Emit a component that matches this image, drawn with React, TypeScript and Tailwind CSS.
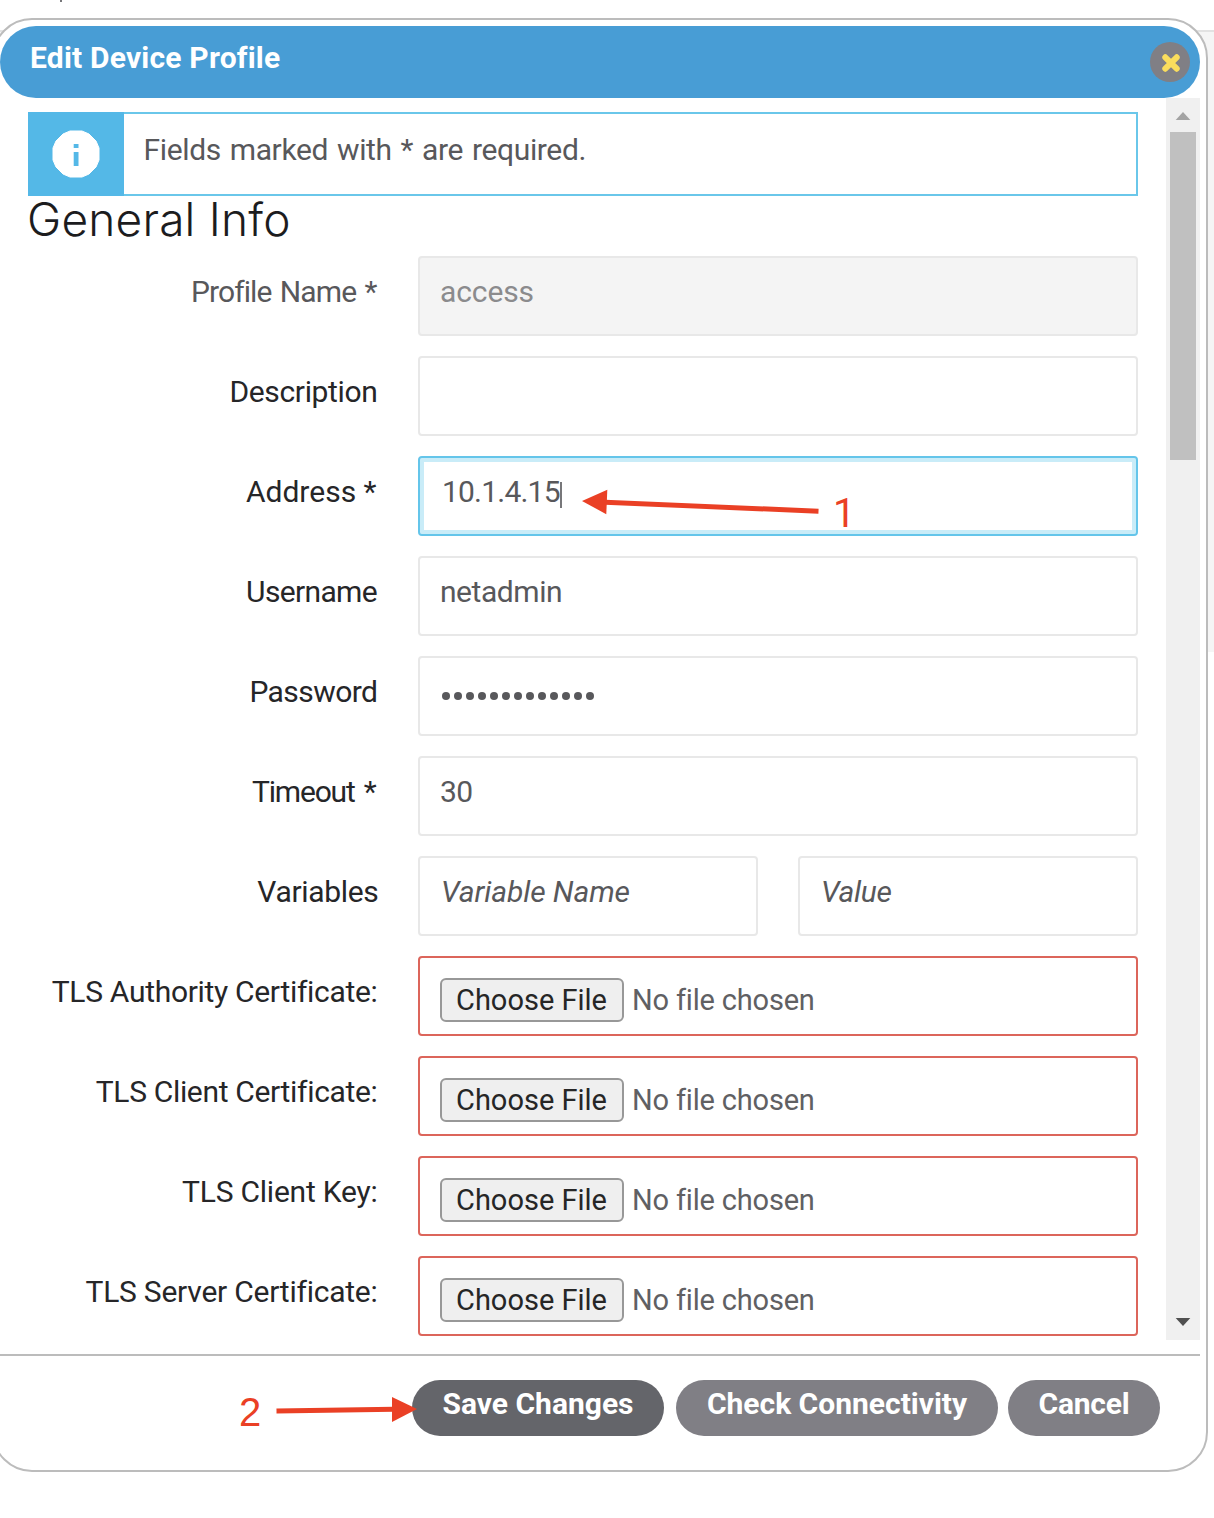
import React from "react";

type FieldRow = {
  label: string;
  labelClass: string;
  content: React.ReactNode;
};

const box = "h-[80px] rounded-[4px] border-2 px-[20px] pt-[14px] leading-[40px]";

function TextField({
  className = "",
  color = "text-[#58585b]",
  children,
}: {
  className?: string;
  color?: string;
  children?: React.ReactNode;
}) {
  return <div className={`${box} flex-1 border-[#e8e8e8] ${color} ${className}`}>{children}</div>;
}

function FileField() {
  return (
    <div className="flex h-[80px] flex-1 items-start gap-[8px] rounded-[4px] border-2 border-[#dc655b] px-[20px] pt-[20px] text-[29px] leading-[40px]">
      <button className="h-[44px] w-[184px] whitespace-nowrap rounded-[6px] border-2 border-[#989898] bg-[#efefef] pl-[14px] text-left leading-[40px] text-[#262626]">
        Choose File
      </button>
      <span className="pt-[2px] tracking-[-0.18px] text-[#606063]">No file chosen</span>
    </div>
  );
}

function PasswordDots() {
  return (
    <div className="flex gap-[4px] pl-[2px] pt-[20px]">
      {Array.from({ length: 13 }, (_, i) => (
        <span key={i} className="size-[8px] rounded-full bg-[#58585b]" />
      ))}
    </div>
  );
}

const rows: FieldRow[] = [
  {
    label: "Profile Name *",
    labelClass: "mr-[1.5px] tracking-[-0.9px] [word-spacing:1.8px] text-[#58585b]",
    content: (
      <TextField className="bg-[#f4f4f4] tracking-[-0.1px]" color="text-[#8b8b8d]">
        access
      </TextField>
    ),
  },
  { label: "Description", labelClass: "mr-[0.5px] tracking-[-0.35px]", content: <TextField /> },
  {
    label: "Address *",
    labelClass: "mr-[1.5px]",
    content: (
      <div
        className={`${box} flex flex-1 border-[#64c5ea] tracking-[-0.8px] text-[#58585b] shadow-[inset_0_0_0_4px_#c9ecf8]`}
      >
        <span className="pl-[2px]">10.1.4.15</span>
        <span className="mt-[10px] h-[26px] w-[2px] bg-[#77777a]" />
      </div>
    ),
  },
  {
    label: "Username",
    labelClass: "mr-[1px] tracking-[-0.65px]",
    content: <TextField className="tracking-[-0.45px]">netadmin</TextField>,
  },
  {
    label: "Password",
    labelClass: "mr-[0.5px] tracking-[-0.55px]",
    content: (
      <TextField>
        <PasswordDots />
      </TextField>
    ),
  },
  {
    label: "Timeout *",
    labelClass: "mr-[2.5px] tracking-[-1.2px] [word-spacing:3px]",
    content: <TextField className="tracking-[-0.5px]">30</TextField>,
  },
  {
    label: "Variables",
    labelClass: "mr-[-0.5px] tracking-[-0.32px]",
    content: (
      <div className="flex flex-1 gap-[40px]">
        <TextField className="italic tracking-[-0.1px]">
          <span className="pl-[1px]">Variable Name</span>
        </TextField>
        <TextField className="italic tracking-[-0.3px]">
          <span className="pl-[1px]">Value</span>
        </TextField>
      </div>
    ),
  },
  { label: "TLS Authority Certificate:", labelClass: "mr-[0.5px] tracking-[-0.31px]", content: <FileField /> },
  { label: "TLS Client Certificate:", labelClass: "mr-[0.5px] tracking-[-0.33px]", content: <FileField /> },
  { label: "TLS Client Key:", labelClass: "mr-[0.5px] tracking-[-0.22px]", content: <FileField /> },
  { label: "TLS Server Certificate:", labelClass: "mr-[0.5px] tracking-[-0.24px]", content: <FileField /> },
];

function Scrollbar() {
  return (
    <div className="ml-auto flex w-[34px] flex-col items-center bg-[#f0f0f0]">
      <svg className="mt-[14px] h-[8px] w-[16px]" viewBox="0 0 16 8">
        <path d="M8 0 L15.3 8 H0.7 Z" fill="#a3a3a3" />
      </svg>
      <div className="mt-[12px] h-[328px] w-[26px] bg-[#c0c0c0]" />
      <svg className="mb-[14px] mt-auto h-[9px] w-[16px]" viewBox="0 0 16 9">
        <path d="M8 9 L15.3 1 H0.7 Z" fill="#505050" />
      </svg>
    </div>
  );
}

function InfoAlert() {
  return (
    <div className="flex h-[84px] w-[1110px] border-2 border-[#6ac7ea]">
      <div className="-my-[2px] -ml-[2px] flex w-[96px] items-center justify-center bg-[#54b8e7]">
        <svg className="size-[48px]" viewBox="0 0 48 48">
          <path
            d="M18 1 L30 1 L37 4 L44 11 L47 18 L47 30 L44 37 L37 44 L30 47 L18 47 L11 44 L4 37 L1 30 L1 18 L4 11 L11 4 Z"
            fill="#fff"
            stroke="#fff"
            strokeLinejoin="round"
          />
          <path d="M21.7 14 h4.8 v4 h-4.8 Z M21.7 22 h4.8 v14 h-4.8 Z" fill="#54b8e7" />
        </svg>
      </div>
      <p className="pl-[19.5px] pt-[16px] leading-[40px] tracking-[-0.36px] text-[#58585b] [word-spacing:1.8px]">
        Fields marked with * are required.
      </p>
    </div>
  );
}

function Annotations() {
  return (
    <div className="pointer-events-none absolute inset-0 text-[40px] leading-[40px] text-[#ea4025]">
      <svg className="absolute inset-0 h-[1518px] w-[1214px]" viewBox="0 0 1214 1518">
        <g fill="#ea4025" stroke="#ea4025">
          <path d="M605 502.2 L818.5 511.2" strokeWidth="5" />
          <path d="M582 501 L607.3 489.7 L606.3 514.2 Z" stroke="none" />
          <path d="M276.5 1411 L394 1409.3" strokeWidth="5" />
          <path d="M417 1409 L392 1397 L392 1422 Z" stroke="none" />
        </g>
      </svg>
      <span className="absolute left-[833px] top-[494px]">1</span>
      <span className="absolute left-[239px] top-[1392px] font-['Liberation_Sans',sans-serif]">2</span>
    </div>
  );
}

const pill = "h-[56px] rounded-full pb-[12px] leading-[40px] pt-[4px] text-center font-bold text-white whitespace-nowrap";

export default function App() {
  return (
    <main className="relative grid h-[1518px] w-[1214px] items-start overflow-hidden bg-white font-['Roboto',sans-serif] text-[30px] text-[#262628]">
      <div className="col-start-1 row-start-1">
        <div className="ml-[60px] h-[2px] w-[2px] bg-[#77777a]" />
        <div className="mt-[28px] h-[622px] border-t-2 border-[#e2e2e2] bg-[#f5f5f5]" />
      </div>

      <section className="col-start-1 row-start-1 -ml-[8px] mt-[18px] flex h-[1454px] w-[1216px] flex-col rounded-[40px] border-2 border-[#bcbcbc] bg-white p-[6px]">
        <header className="flex h-[72px] shrink-0 rounded-full bg-[#489dd5] pl-[30px] pr-[10px]">
          <h1 className="pt-[12px] font-bold leading-[40px] tracking-[0.2px] text-white">Edit Device Profile</h1>
          <button className="ml-auto mt-[16px] flex size-[40px] items-center justify-center rounded-full bg-[#807f85]">
            <svg className="size-[40px]" viewBox="0 0 40 40">
              <path
                d="M15.3 15.3 L26.7 26.7 M26.7 15.3 L15.3 26.7"
                stroke="#fadd5d"
                strokeWidth="6"
                strokeLinecap="round"
              />
            </svg>
          </button>
        </header>

        <div className="flex h-[1242px] shrink-0">
          <div className="w-[1138px] pl-[28px] pt-[14px]">
            <InfoAlert />
            <h2 className="-ml-[1px] -mt-[4px] h-[64px] font-['Inter',sans-serif] text-[46px] font-light leading-[55px] tracking-[0.2px] text-[#1c1c1e]">
              General Info
            </h2>
            <div className="flex flex-col gap-[20px]">
              {rows.map((row) => (
                <div key={row.label} className="flex">
                  <div className="flex w-[350px] shrink-0 justify-end whitespace-nowrap pt-[16px] leading-[40px]">
                    <label className={row.labelClass}>{row.label}</label>
                  </div>
                  <div className="ml-[40px] flex flex-1">{row.content}</div>
                </div>
              ))}
            </div>
          </div>
          <Scrollbar />
        </div>

        <footer className="mt-[14px] flex justify-end border-t-2 border-[#bcbcbc] pr-[40px] pt-[24px]">
          <button className={`${pill} mr-[12px] w-[252px] bg-[#64656a]`}>Save Changes</button>
          <button className={`${pill} mr-[10px] w-[322px] bg-[#807f85]`}>Check Connectivity</button>
          <button className={`${pill} w-[152px] bg-[#807f85] tracking-[-0.2px]`}>Cancel</button>
        </footer>
      </section>

      <Annotations />
    </main>
  );
}
